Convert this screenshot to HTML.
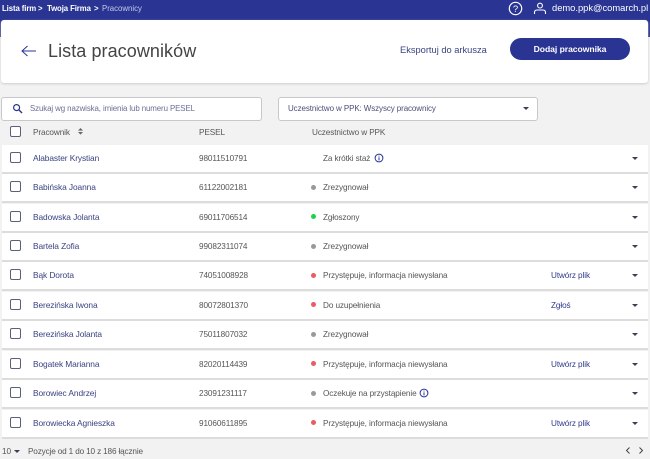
<!DOCTYPE html>
<html lang="pl"><head><meta charset="utf-8"><style>
html,body{margin:0;padding:0}
body{width:650px;height:459px;overflow:hidden;background:#f2f2f2;position:relative;font-family:"Liberation Sans",sans-serif;font-size:8.2px;letter-spacing:-.1px;color:#555}
div,span{position:absolute;white-space:nowrap}
svg{position:absolute}
.top{left:0;top:0;width:650px;height:37px;background:#2a3593}
.card{left:1px;top:20px;width:647px;height:63px;background:#fff;border-radius:3px;box-shadow:0 1px 2px #ccc}
.row{left:2px;width:646px;height:27px;background:#fff;box-shadow:0 2px 0 #dcdcdc}
.t{line-height:12px}
.n{color:#3a4380;left:33px;font-size:8.4px}
.p{left:199px;margin-top:1px}
.s{left:323px;margin-top:1px}
.a{left:551px;color:#2f3a8a;margin-top:1px}
.cb{left:10px;width:9px;height:9px;border:1.3px solid #5a5f7a;border-radius:2px;background:#fff}
.d{left:311px;width:5px;height:5px;border-radius:50%}
.tri{left:632px;width:0;height:0;border-left:3.5px solid transparent;border-right:3.5px solid transparent;border-top:3.5px solid #3a3f55}
.box{background:#fff;border:1px solid #c8c8c8;border-radius:3px;height:22px}
.b{color:#fff;font-weight:bold;font-size:7.8px;top:3px;letter-spacing:-.1px}
</style></head><body>
<div class="top"></div>
<div class="t b" style="left:2px">Lista firm</div>
<div class="t b" style="left:38px">&gt;</div>
<div class="t b" style="left:47px">Twoja Firma</div>
<div class="t b" style="left:94px">&gt;</div>
<div class="t" style="left:102px;top:3px;color:#c5c9e6;font-size:7.8px;letter-spacing:0">Pracownicy</div>
<svg style="left:508px;top:1px" width="15" height="15" viewBox="0 0 15 15"><circle cx="7.5" cy="7.5" r="6.2" fill="none" stroke="#fff" stroke-width="1.2"/><text x="7.5" y="11" font-size="9.5" font-family="Liberation Sans" fill="#fff" text-anchor="middle" letter-spacing="0">?</text></svg>
<svg style="left:533px;top:2px" width="14" height="13" viewBox="0 0 14 13"><circle cx="7" cy="3.6" r="2.4" fill="none" stroke="#fff" stroke-width="1.1"/><path d="M1.5 12V10.5Q1.5 8 4 8H10Q12.5 8 12.5 10.5V12" fill="none" stroke="#fff" stroke-width="1.1"/></svg>
<div class="t" style="left:552px;top:2px;color:#fff;font-size:9.4px;letter-spacing:-.02px">demo.ppk@comarch.pl</div>
<div class="card"></div>
<svg style="left:20px;top:44px" width="18" height="14" viewBox="0 0 18 14"><path d="M16 7H2M7.5 2L2 7L7.5 12" fill="none" stroke="#2a3593" stroke-width="1"/></svg>
<div style="left:48px;top:39px;font-size:18px;line-height:24px;color:#444;letter-spacing:.07px">Lista pracowników</div>
<div class="t" style="left:400px;top:44px;color:#3a4380;font-size:9.3px;letter-spacing:0">Eksportuj do arkusza</div>
<div style="left:510px;top:38px;width:120px;height:22px;background:#2a3593;border-radius:11px;color:#fff;font-weight:bold;font-size:8.6px;letter-spacing:-.05px;line-height:22px;text-align:center">Dodaj pracownika</div>
<div class="box" style="left:1px;top:97px;width:259px"></div>
<svg style="left:12px;top:103px" width="11" height="11" viewBox="0 0 11 11"><circle cx="4.6" cy="4.6" r="3" fill="none" stroke="#2a3593" stroke-width="1.2"/><path d="M7 7L10 10" stroke="#2a3593" stroke-width="1.4"/></svg>
<div class="t" style="left:30px;top:103px;color:#6a6f96;font-size:7.9px;letter-spacing:-.1px">Szukaj wg nazwiska, imienia lub numeru PESEL</div>
<div class="box" style="left:278px;top:97px;width:258px"></div>
<div class="t" style="left:288px;top:103px;color:#4a4f7a;font-size:8px;letter-spacing:-.1px">Uczestnictwo w PPK: Wszyscy pracownicy</div>
<div class="tri" style="left:522.5px;top:107px"></div>
<div class="cb" style="top:126px"></div>
<div class="t" style="left:33px;top:127px">Pracownik</div>
<svg style="left:77px;top:127px" width="7" height="9" viewBox="0 0 7 9"><path d="M3.5 1L6 3.6H1Z" fill="#666"/><path d="M1 5H6L3.5 7.6Z" fill="#666"/></svg>
<div class="t p" style="top:126px">PESEL</div>
<div class="t" style="left:312px;top:127px">Uczestnictwo w PPK</div>

<div class="row" style="top:145px"></div><div class="cb" style="top:152px"></div><div class="t n" style="top:152px">Alabaster Krystian</div><div class="t p" style="top:152px">98011510791</div><div class="t s" style="top:152px">Za krótki staż</div>
<svg style="left:374px;top:153px" width="10" height="10" viewBox="0 0 10 10"><circle cx="5" cy="5" r="3.9" fill="none" stroke="#2a3593"/><path d="M5 4.4V7.4M5 2.6V3.5" stroke="#2a3593"/></svg><div class="tri" style="top:157px"></div>

<div class="row" style="top:174px"></div><div class="cb" style="top:181px"></div><div class="t n" style="top:181px">Babińska Joanna</div><div class="t p" style="top:181px">61122002181</div><div class="d" style="top:185px;background:#999"></div><div class="t s" style="top:181px">Zrezygnował</div><div class="tri" style="top:186px"></div>

<div class="row" style="top:204px"></div><div class="cb" style="top:211px"></div><div class="t n" style="top:211px">Badowska Jolanta</div><div class="t p" style="top:211px">69011706514</div><div class="d" style="top:214px;background:#1fd14f"></div><div class="t s" style="top:211px">Zgłoszony</div><div class="tri" style="top:216px"></div>

<div class="row" style="top:233px"></div><div class="cb" style="top:240px"></div><div class="t n" style="top:240px">Bartela Zofia</div><div class="t p" style="top:240px">99082311074</div><div class="d" style="top:244px;background:#999"></div><div class="t s" style="top:240px">Zrezygnował</div><div class="tri" style="top:245px"></div>

<div class="row" style="top:262px"></div><div class="cb" style="top:269px"></div><div class="t n" style="top:269px">Bąk Dorota</div><div class="t p" style="top:269px">74051008928</div><div class="d" style="top:273px;background:#ec5a62"></div><div class="t s" style="top:269px">Przystępuje, informacja niewysłana</div><div class="t a" style="top:269px">Utwórz plik</div><div class="tri" style="top:274px"></div>

<div class="row" style="top:292px"></div><div class="cb" style="top:299px"></div><div class="t n" style="top:299px">Berezińska Iwona</div><div class="t p" style="top:299px">80072801370</div><div class="d" style="top:302px;background:#ec5a62"></div><div class="t s" style="top:299px">Do uzupełnienia</div><div class="t a" style="top:299px">Zgłoś</div><div class="tri" style="top:304px"></div>

<div class="row" style="top:321px"></div><div class="cb" style="top:328px"></div><div class="t n" style="top:328px">Berezińska Jolanta</div><div class="t p" style="top:328px">75011807032</div><div class="d" style="top:332px;background:#999"></div><div class="t s" style="top:328px">Zrezygnował</div><div class="tri" style="top:333px"></div>

<div class="row" style="top:351px"></div><div class="cb" style="top:358px"></div><div class="t n" style="top:358px">Bogatek Marianna</div><div class="t p" style="top:358px">82020114439</div><div class="d" style="top:361px;background:#ec5a62"></div><div class="t s" style="top:358px">Przystępuje, informacja niewysłana</div><div class="t a" style="top:358px">Utwórz plik</div><div class="tri" style="top:363px"></div>

<div class="row" style="top:380px"></div><div class="cb" style="top:387px"></div><div class="t n" style="top:387px">Borowiec Andrzej</div><div class="t p" style="top:387px">23091231117</div><div class="d" style="top:391px;background:#999"></div><div class="t s" style="top:387px">Oczekuje na przystąpienie</div>
<svg style="left:419px;top:388px" width="10" height="10" viewBox="0 0 10 10"><circle cx="5" cy="5" r="3.9" fill="none" stroke="#2a3593"/><path d="M5 4.4V7.4M5 2.6V3.5" stroke="#2a3593"/></svg><div class="tri" style="top:392px"></div>

<div class="row" style="top:410px"></div><div class="cb" style="top:417px"></div><div class="t n" style="top:417px">Borowiecka Agnieszka</div><div class="t p" style="top:417px">91060611895</div><div class="d" style="top:420px;background:#ec5a62"></div><div class="t s" style="top:417px">Przystępuje, informacja niewysłana</div><div class="t a" style="top:417px">Utwórz plik</div><div class="tri" style="top:422px"></div>

<div class="t" style="left:2px;top:446px">10</div>
<div class="tri" style="left:14px;top:450px"></div>
<div class="t" style="left:28px;top:446px;letter-spacing:-.15px">Pozycje od 1 do 10 z 186 łącznie</div>
<svg style="left:624px;top:445.5px" width="8" height="9" viewBox="0 0 8 9"><path d="M5.5 1.5L2.5 4.5L5.5 7.5" fill="none" stroke="#444"/></svg>
<svg style="left:637px;top:445.5px" width="8" height="9" viewBox="0 0 8 9"><path d="M2.5 1.5L5.5 4.5L2.5 7.5" fill="none" stroke="#444"/></svg>
</body></html>
